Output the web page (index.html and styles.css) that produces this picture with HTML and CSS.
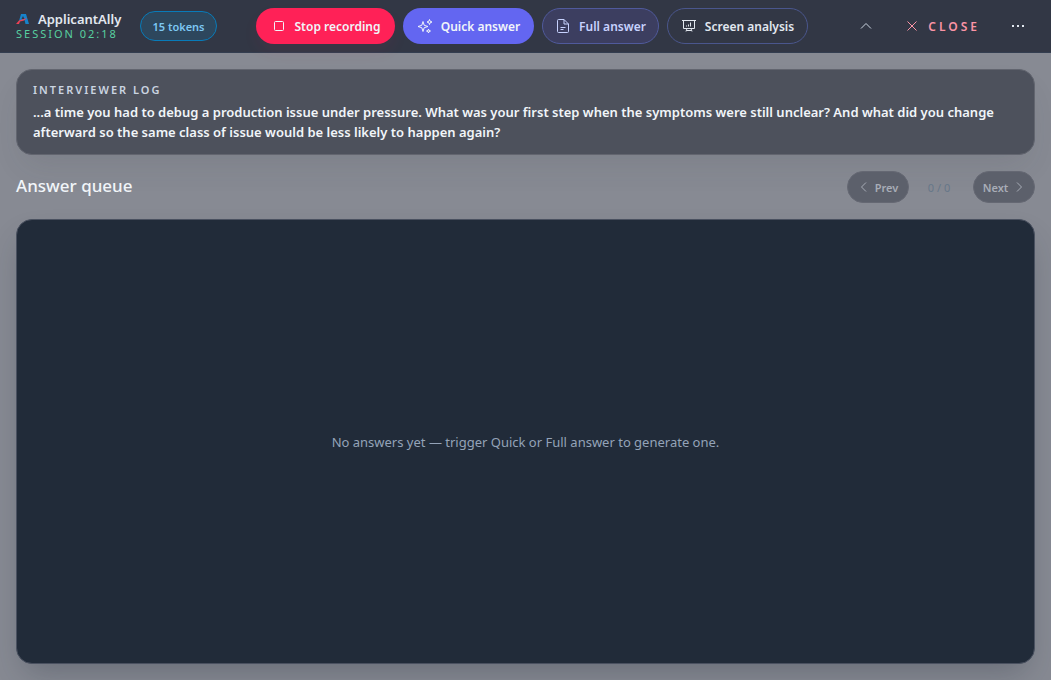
FILE: index.html
```html
<!DOCTYPE html>
<html lang="en">
<head>
<meta charset="utf-8">
<title>ApplicantAlly</title>
<link rel="stylesheet" href="styles.css">
</head>
<body>
<header class="topbar">
  <div class="brand">
    <div class="brand-name">
      <svg class="logo" viewBox="0 0 14 12" aria-hidden="true"><path d="M5 1h5l3 10H9.500L8.500 7 3 8z" fill="#1683cc"/><path d="M7 3 5.500 6h3z" fill="#323745"/><path d="M0 11 3 7.500 11 5 8 7.500 4 8.500 3 11z" fill="#ed4054"/></svg>
      <span>ApplicantAlly</span>
    </div>
    <div class="session">SESSION 02:18</div>
  </div>
  <div class="tokens">15 tokens</div>
  <div class="actions">
    <button class="btn btn-stop" type="button">
      <svg class="icon" viewBox="0 0 16 16" aria-hidden="true"><rect x="3.500" y="3.500" width="9" height="9" rx="1"/></svg>
      <span>Stop recording</span>
    </button>
    <button class="btn btn-quick" type="button">
      <svg class="icon" viewBox="0 0 16 16" aria-hidden="true"><path d="M6 3.500 7.200 7.300 11 8.500 7.200 9.700 6 13.500 4.800 9.700 1 8.500 4.800 7.300zM12.500 1.500l.7 1.800 1.800.7-1.800.7-.7 1.800-.7-1.800L10 4l1.800-.7zM11.500 11l.5 1.500 1.500.5-1.500.5-.5 1.500-.5-1.500-1.500-.5 1.500-.5z"/></svg>
      <span>Quick answer</span>
    </button>
    <button class="btn btn-full" type="button">
      <svg class="icon" viewBox="0 0 16 16" aria-hidden="true"><path d="M9 1.500H3.500q-1 0-1 1v11q0 1 1 1h9q1 0 1-1V6zM9 1.500V6h4.500M5.500 9.500h5M5.500 11.500h3"/></svg>
      <span>Full answer</span>
    </button>
    <button class="btn btn-screen" type="button">
      <svg class="icon" viewBox="0 0 16 16" aria-hidden="true"><path d="M1 2.500h14M2.500 2.500v8h11v-8M6 10.500l-1 3M10 10.500l1 3M5.500 12.500h5M5.500 8.500v-1M7.500 8.500v-2M9.500 8.500v-4"/></svg>
      <span>Screen analysis</span>
    </button>
  </div>
  <div class="window-actions">
    <button class="plain" type="button" aria-label="Collapse"><svg class="icon" viewBox="0 0 16 16" aria-hidden="true"><path d="m3 10.500 5-5 5 5"/></svg></button>
    <button class="plain close" type="button"><svg class="icon" viewBox="0 0 16 16" aria-hidden="true"><path d="m3.500 3.500 9 9m0-9-9 9"/></svg><span>CLOSE</span></button>
    <button class="plain more" type="button" aria-label="More"><svg class="icon" viewBox="0 0 16 16" aria-hidden="true"><path d="M2 7h2v2H2zM7 7h2v2H7zM12 7h2v2h-2z"/></svg></button>
  </div>
</header>
<main class="content">
  <section class="log">
    <h2 class="log-title">INTERVIEWER LOG</h2>
    <p class="log-text">...a time you had to debug a production issue under pressure. What was your first step when the symptoms were still unclear? And what did you change afterward so the same class of issue would be less likely to happen again?</p>
  </section>
  <div class="queue-head">
    <h1 class="queue-title">Answer queue</h1>
    <nav class="pager" aria-label="Answers">
      <button class="page-btn" type="button" disabled><svg class="chevron" viewBox="0 0 12 12" aria-hidden="true"><path d="M8 1.500 3.500 6 8 10.500"/></svg><span>Prev</span></button>
      <span class="count">0 / 0</span>
      <button class="page-btn" type="button" disabled><span>Next</span><svg class="chevron" viewBox="0 0 12 12" aria-hidden="true"><path d="M4 1.500 8.500 6 4 10.500"/></svg></button>
    </nav>
  </div>
  <section class="answers"><p class="empty">No answers yet — trigger Quick or Full answer to generate one.</p></section>
</main>
</body>
</html>
```

FILE: styles.css
```css
* { box-sizing: border-box; }
body {
  display: flex;
  flex-direction: column;
  min-height: 100vh;
  margin: 0;
  background: #878a93;
  color: #f1f5f9;
  font-family: "Noto Sans", "Open Sans", sans-serif;
}
h1, h2, p { margin: 0; }
button { font: inherit; color: inherit; }
.topbar {
  display: flex;
  align-items: center;
  height: 53px;
  padding: 0 16px;
  background: #323745;
  border-bottom: 1px solid #343e50;
}
.brand { width: 124px; }
.brand-name {
  display: flex;
  align-items: center;
  gap: 8px;
  font-size: 13px;
  line-height: 16px;
  font-weight: 600;
  color: #e2e8f0;
}
.logo { width: 14px; height: 12px; }
.session {
  font-size: 11px;
  line-height: 14px;
  letter-spacing: 2px;
  color: #58d0a0;
  white-space: nowrap;
}
.tokens {
  width: 77px;
  height: 30px;
  border: 1px solid #087bb9;
  border-radius: 15px;
  background: #2d475d;
  color: #7dc8f4;
  font-size: 11px;
  font-weight: 600;
  line-height: 29px;
  text-align: center;
}
.actions { display: flex; gap: 8px; margin-left: 39px; }
.btn {
  display: flex;
  align-items: center;
  justify-content: center;
  gap: 8px;
  height: 36px;
  padding: 0;
  border: 1px solid transparent;
  border-radius: 18px;
  font-size: 12px;
  font-weight: 600;
  white-space: nowrap;
}
.icon { width: 16px; height: 16px; flex: none; fill: none; stroke: currentColor; }
.btn-stop { width: 139px; background: #ff2157; box-shadow: 0 8px 16px rgba(255, 33, 87, 0.06); }
.btn-quick { width: 131px; background: #6366f1; }
.btn-full { width: 117px; background: #3c3e60; border-color: #505a9c; color: #c7d2fe; }
.btn-screen { width: 141px; border-color: #4a568d; background: transparent; color: #e2e8f0; }
.window-actions { display: flex; align-items: center; gap: 30px; margin-left: auto; padding-right: 9px; }
.plain { display: flex; align-items: center; gap: 8px; padding: 0; border: 0; background: none; color: #cbd5e1; }
.close { color: #fb94a6; font-size: 12px; font-weight: 600; letter-spacing: 3px; }
.more { color: #e2e8f0; }
.more .icon { fill: currentColor; stroke: none; }
.content { display: flex; flex: 1; flex-direction: column; gap: 16px; padding: 16px; }
.log {
  padding: 12px 16px;
  border: 1px solid #62656f;
  border-radius: 16px;
  background: #4d515c;
  box-shadow: 0 16px 32px -8px rgba(50, 55, 69, 0.12);
}
.log-title { color: #cbd5e1; font-size: 11px; line-height: 16px; font-weight: 600; letter-spacing: 2px; }
.log-text { margin-top: 4px; font-size: 13px; line-height: 20px; font-weight: 600; }
.queue-head { display: flex; align-items: flex-start; justify-content: space-between; }
.queue-title { font-size: 17px; line-height: 30px; font-weight: 500; }
.pager { display: flex; align-items: center; }
.page-btn {
  display: flex;
  align-items: center;
  justify-content: center;
  gap: 5px;
  width: 62px;
  height: 32px;
  padding: 0;
  border: 1px solid #656873;
  border-radius: 16px;
  background: #5c606b;
  color: #a8adb7;
  font-size: 11px;
  font-weight: 600;
}
.chevron { width: 12px; height: 12px; fill: none; stroke: currentColor; }
.count { width: 64px; padding-right: 4px; text-align: center; color: #667789; font-size: 11px; }
.answers {
  display: flex;
  flex: 1;
  align-items: center;
  justify-content: center;
  border: 1px solid #4a5160;
  border-radius: 16px;
  background: #212b39;
  box-shadow: 0 16px 32px -8px rgba(34, 42, 57, 0.3);
}
.empty { color: #94a3b8; font-size: 13px; line-height: 20px; }
```
